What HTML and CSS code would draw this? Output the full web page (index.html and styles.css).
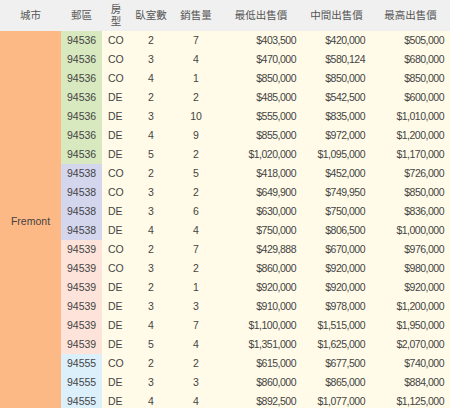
FILE: index.html
```html
<!DOCTYPE html>
<html>
<head>
<meta charset="utf-8">
<link rel="stylesheet" href="styles.css">
</head>
<body>
<table class="sales">
  <colgroup>
    <col class="c-city"><col class="c-zip"><col class="c-type"><col class="c-beds"><col class="c-count"><col class="c-min"><col class="c-mid"><col class="c-max">
  </colgroup>
  <thead>
    <tr>
      <th>城市</th><th>郵區</th><th class="wrap">房型</th><th>臥室數</th><th>銷售量</th><th>最低出售價</th><th>中間出售價</th><th>最高出售價</th>
    </tr>
  </thead>
  <tbody>
    <tr><td class="city" rowspan="20">Fremont</td><td class="zip z36">94536</td><td class="type">CO</td><td class="num">2</td><td class="num">7</td><td class="price">$403,500</td><td class="price">$420,000</td><td class="price">$505,000</td></tr>
    <tr><td class="zip z36">94536</td><td class="type">CO</td><td class="num">3</td><td class="num">4</td><td class="price">$470,000</td><td class="price">$580,124</td><td class="price">$680,000</td></tr>
    <tr><td class="zip z36">94536</td><td class="type">CO</td><td class="num">4</td><td class="num">1</td><td class="price">$850,000</td><td class="price">$850,000</td><td class="price">$850,000</td></tr>
    <tr><td class="zip z36">94536</td><td class="type">DE</td><td class="num">2</td><td class="num">2</td><td class="price">$485,000</td><td class="price">$542,500</td><td class="price">$600,000</td></tr>
    <tr><td class="zip z36">94536</td><td class="type">DE</td><td class="num">3</td><td class="num">10</td><td class="price">$555,000</td><td class="price">$835,000</td><td class="price">$1,010,000</td></tr>
    <tr><td class="zip z36">94536</td><td class="type">DE</td><td class="num">4</td><td class="num">9</td><td class="price">$855,000</td><td class="price">$972,000</td><td class="price">$1,200,000</td></tr>
    <tr><td class="zip z36">94536</td><td class="type">DE</td><td class="num">5</td><td class="num">2</td><td class="price">$1,020,000</td><td class="price">$1,095,000</td><td class="price">$1,170,000</td></tr>
    <tr><td class="zip z38">94538</td><td class="type">CO</td><td class="num">2</td><td class="num">5</td><td class="price">$418,000</td><td class="price">$452,000</td><td class="price">$726,000</td></tr>
    <tr><td class="zip z38">94538</td><td class="type">CO</td><td class="num">3</td><td class="num">2</td><td class="price">$649,900</td><td class="price">$749,950</td><td class="price">$850,000</td></tr>
    <tr><td class="zip z38">94538</td><td class="type">DE</td><td class="num">3</td><td class="num">6</td><td class="price">$630,000</td><td class="price">$750,000</td><td class="price">$836,000</td></tr>
    <tr><td class="zip z38">94538</td><td class="type">DE</td><td class="num">4</td><td class="num">4</td><td class="price">$750,000</td><td class="price">$806,500</td><td class="price">$1,000,000</td></tr>
    <tr><td class="zip z39">94539</td><td class="type">CO</td><td class="num">2</td><td class="num">7</td><td class="price">$429,888</td><td class="price">$670,000</td><td class="price">$976,000</td></tr>
    <tr><td class="zip z39">94539</td><td class="type">CO</td><td class="num">3</td><td class="num">2</td><td class="price">$860,000</td><td class="price">$920,000</td><td class="price">$980,000</td></tr>
    <tr><td class="zip z39">94539</td><td class="type">DE</td><td class="num">2</td><td class="num">1</td><td class="price">$920,000</td><td class="price">$920,000</td><td class="price">$920,000</td></tr>
    <tr><td class="zip z39">94539</td><td class="type">DE</td><td class="num">3</td><td class="num">3</td><td class="price">$910,000</td><td class="price">$978,000</td><td class="price">$1,200,000</td></tr>
    <tr><td class="zip z39">94539</td><td class="type">DE</td><td class="num">4</td><td class="num">7</td><td class="price">$1,100,000</td><td class="price">$1,515,000</td><td class="price">$1,950,000</td></tr>
    <tr><td class="zip z39">94539</td><td class="type">DE</td><td class="num">5</td><td class="num">4</td><td class="price">$1,351,000</td><td class="price">$1,625,000</td><td class="price">$2,070,000</td></tr>
    <tr><td class="zip z55">94555</td><td class="type">CO</td><td class="num">2</td><td class="num">2</td><td class="price">$615,000</td><td class="price">$677,500</td><td class="price">$740,000</td></tr>
    <tr><td class="zip z55">94555</td><td class="type">DE</td><td class="num">3</td><td class="num">3</td><td class="price">$860,000</td><td class="price">$865,000</td><td class="price">$884,000</td></tr>
    <tr><td class="zip z55">94555</td><td class="type">DE</td><td class="num">4</td><td class="num">4</td><td class="price">$892,500</td><td class="price">$1,077,000</td><td class="price">$1,125,000</td></tr>
  </tbody>
</table>
</body>
</html>
```
FILE: styles.css
```css
html, body {
  margin: 0;
  padding: 0;
  background: #ffffff;
}
.sales {
  width: 450px;
  table-layout: fixed;
  border-collapse: collapse;
  font-family: "Liberation Sans", Arial, "Noto Sans CJK TC", sans-serif;
  font-size: 10.5px;
  color: #444444;
}
.c-city { width: 61px; }
.c-zip { width: 41px; }
.c-type { width: 28px; }
.c-beds { width: 42px; }
.c-count { width: 48px; }
.c-min { width: 82px; }
.c-mid { width: 69px; }
.c-max { width: 79px; }
.sales th {
  background: #f0f0f0;
  color: #555555;
  font-weight: normal;
  text-align: center;
  padding: 4px 5px;
  line-height: 11.5px;
  height: 23px;
  vertical-align: middle;
  white-space: nowrap;
}
.sales th.wrap {
  white-space: normal;
  padding: 4px 6px;
}
.sales td {
  background: #fffbe8;
  padding: 3px 6px;
  line-height: 13px;
  height: 13px;
  white-space: nowrap;
}
.sales td.city {
  background: #fdb985;
  text-align: center;
  vertical-align: middle;
}
.sales td.zip { text-align: right; }
.sales td.z36 { background: #d8e8bf; }
.sales td.z38 { background: #d4d6ee; }
.sales td.z39 { background: #fde3d9; }
.sales td.z55 { background: #dcf0fb; }
.sales td.type { text-align: left; }
.sales td.num { text-align: center; }
.sales td.price {
  text-align: right;
  letter-spacing: -0.5px;
}
```
